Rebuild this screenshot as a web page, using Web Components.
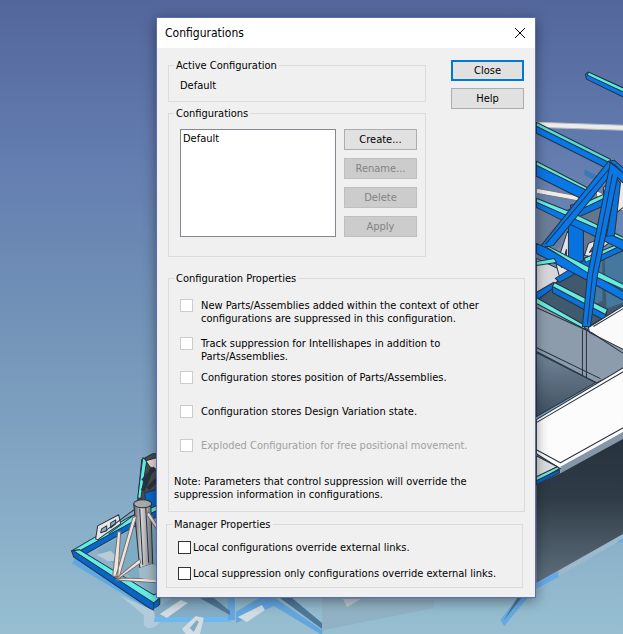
<!DOCTYPE html>
<html lang="en">
<head>
<meta charset="utf-8">
<title>Configurations</title>
<style>
body{margin:0;font:11px/13px "DejaVu Sans Condensed","Noto Sans",sans-serif;color:#000;background:#7797ba}
</style>
</head>
<body>
<config-workspace></config-workspace>
<script>
function define(name, html, setup) {
  const template = document.createElement('template');
  template.innerHTML = html;
  customElements.define(name, class extends HTMLElement {
    constructor() {
      super();
      this.attachShadow({ mode: 'open' }).append(template.content.cloneNode(true));
    }
    connectedCallback() { if (setup) setup(this, this.shadowRoot); }
  });
}

define('model-scene', `
<style>
:host{display:block;overflow:hidden}
svg{display:block;width:100%;height:100%}
</style>
<svg viewBox="0 0 623 634" preserveAspectRatio="xMidYMid slice" aria-hidden="true">
  <defs>
    <linearGradient id="sky" x1="0" y1="0" x2="0" y2="1"><stop offset="0" stop-color="#53669c"/><stop offset=".25" stop-color="#637db0"/><stop offset=".5" stop-color="#7292b7"/><stop offset=".8" stop-color="#87acc7"/><stop offset="1" stop-color="#97bfd1"/></linearGradient>
    <linearGradient id="side" x1="0" y1="0" x2="0" y2="1"><stop offset="0" stop-color="#26323c"/><stop offset=".4" stop-color="#2f3c47"/><stop offset="1" stop-color="#60717f"/></linearGradient>
    <linearGradient id="floor" x1="0" y1="0" x2="0" y2="1"><stop offset="0" stop-color="#71859a"/><stop offset="1" stop-color="#3f4f5e"/></linearGradient>
    <linearGradient id="tube" x1="0" y1="0" x2="1" y2="0"><stop offset="0" stop-color="#5c5d62"/><stop offset=".4" stop-color="#d5d3d5"/><stop offset="1" stop-color="#77787c"/></linearGradient>
  </defs>
  <rect width="623" height="634" fill="url(#sky)"/>

  <g stroke="#28323d" stroke-width="1" stroke-linejoin="round">
    <path d="M536 122L623 125V130L536 127Z" fill="#eeecea" stroke="#b9bac0"/>
    <path d="M588 72L623 88V97L586 79L585 74Z" fill="#0878e8"/><path d="M588 72L623 88V92L587 75Z" fill="#58eee5"/>
    <path d="M536 188L580 196V201L536 193ZM596 190L623 205V211L596 196Z" fill="#eeecea" stroke="#777"/>
    <path d="M584 169L600 177V183L584 175Z" fill="#3c79b8" stroke="none"/>
    <path d="M536 204L570 213L560 246L536 262Z" fill="#6b7d98" stroke="none"/>
    <path d="M570 205L606 196L606 244L575 258Z" fill="#62768f"/>
    <path d="M536 258L566 272L553 285L536 296Z" fill="#d5d7dc"/>
    <path d="M536 300L583 258L623 244V306L588 326Z" fill="#41596f"/>
    <path d="M584 264L602 258V300L590 307ZM604 252L623 248V302L606 308Z" fill="#45789f" stroke="none"/>
    <path d="M603 187L610 182V198L603 202ZM619 182L623 181V207L615 213Z" fill="#eceaea"/>
    <path d="M556 265L567 231L570 233L568 258L575 270L559 276ZM561 267L566 249L566 263Z" fill="#e4e3e4" fill-rule="evenodd"/>
    <path d="M584 255L588 243L608 235V243L590 256ZM589 252L592 247L602 243V247Z" fill="#e4e3e4" fill-rule="evenodd"/>
    <path d="M568 222L583 226V260L568 267Z" fill="#0873df"/>
    <path d="M565 214L609 194V203L566 222Z" fill="#0873df"/><path d="M565 211L608 192V196L566 216Z" fill="#65ebdf"/>
    <path d="M555 278L585 259L623 242V250L588 266L559 282Z" fill="#0873df"/><path d="M584 258L623 241V244L585 262Z" fill="#65ebdf"/>
    <path d="M536 163L588 190L584 200L536 176Z" fill="#0878e8"/><path d="M536 161L590 189V192L536 165Z" fill="#65ebdf"/>
    <path d="M536 200L571 215L623 240V250L566 222L536 207Z" fill="#0878e8"/><path d="M536 198L571 212L623 237V240L566 215L536 202Z" fill="#65ebdf"/>
    <path d="M536 124L611 161L606 168L536 133Z" fill="#0878e8"/><path d="M536 122L610 159V163L536 126Z" fill="#55dcd8"/>
    <path d="M611 172L620 183L614 235L606 236L613 196Z" fill="#0873df"/>
    <path d="M541 245L608 161L615 165L613 171L553 245L540 248Z" fill="#0878e8"/><path d="M545 244L611 166" fill="none"/>
    <path d="M536 243L545 247L623 291V300L589 281L536 253Z" fill="#0878e8"/><path d="M545 246L548 246L623 284V289L588 273Z" fill="#65ebdf"/>
    <path d="M536 261L554 258L556 262L536 265Z" fill="#65ebdf"/>
    <path d="M536 292L553 282L558 284L536 300Z" fill="#0873df"/>
    <path d="M552 285L606 312L604 320L552 292Z" fill="#0873df"/><path d="M554 282L607 309L605 314L552 286Z" fill="#65ebdf"/>
    <path d="M536 302L587 329L623 345V370L596 382L536 351Z" fill="#8d9cad"/>
    <path d="M536 297L583 324L585 329L536 303Z" fill="#65ebdf"/>
    <path d="M610 162L616 167L623 173V183L617 177L597 275L590 326L582 326L587 275Z" fill="#0878e8"/><path d="M612 174L592 275L587 324" fill="none"/>
    <path d="M608 161L615 165L623 173V168L614 160Z" fill="#0878e8"/>
    <path d="M588 327L623 305V349L589 332Z" fill="#fafafa"/>
    <path d="M536 307L591 332L623 353M582 329V376M586 330V378M536 347L600 378M593 326L623 308" fill="none"/>
    <path d="M536 352L595 382L536 416Z" fill="url(#floor)"/>
    <path d="M536 419L623 367V432L560 468L536 453Z" fill="#fcfcfc"/>
    <path d="M536 422L623 371M536 449L560 462L623 427M536 456L556 467" fill="none"/>
    <path d="M560 466L623 431V438L561 472Z" fill="#8496a8" stroke="none"/>
    <path d="M536 455L557 466L536 477Z" fill="#dadde0"/>
    <path d="M536 476L557 466L559 468L536 481Z" fill="#65ebdf"/><path d="M536 480L559 469V472L536 484Z" fill="#0865ce"/>
  </g>
  <path d="M536 484L561 472L623 438V536L536 585Z" fill="url(#side)"/>
  <path d="M536 582L623 533V538L536 588Z" fill="#9db9cc"/><path d="M536 582L558 570V576L536 588ZM615 542L623 537V541Z" fill="#65a9e8"/>

  <g stroke="#263441" stroke-width="1" stroke-linejoin="round">
    <path d="M74 560L156 609L160 606" stroke="#5fa8e1" stroke-width="6" fill="none"/>
    <path d="M97 550L134 527H160V598Z" fill="#7eacc4" stroke="none"/>
    <path d="M97 554L111 550L121 560L108 560Z" fill="#b8cbd7" stroke="none"/>
    <path d="M137 510L142 459L153 453H160V515Z" fill="#4c4b50"/>
    <path d="M138 497L143 457L147 460L141 498Z" fill="#60eee2"/><path d="M146 460L160 456V472L150 466Z" fill="#e7d9d8"/><path d="M145 492L160 488V514L146 506Z" fill="#0868cd"/>
    <path d="M143 480L155 467M143 490L152 468M148 488L158 478" stroke-width="4"/>
    <path d="M72 550L128 520L160 508V515L132 527L79 557Z" fill="#0867cf"/><path d="M72 550L128 517L159 504V509L131 522L80 550Z" fill="#62eee5"/>
    <path d="M72 550L80 549L154 597L160 594V603L154 610L74 556Z" fill="#0865c9"/><path d="M74 550L80 549L154 594L160 591V597L154 602Z" fill="#62eee5"/><path d="M154 601V609" fill="none"/>
    <path d="M96 538L98 525L119 514L121 523L106 533L98 539ZM101 532L102 528L107 525V530ZM111 527V522L116 519V523Z" fill="#e6e6e7" fill-rule="evenodd"/>
    <path d="M107 529L137 507M109 533L137 512" fill="none"/>
    <path d="M134 503H151L153 563L140 567Z" fill="url(#tube)"/><path d="M140 508L143 564M146 507L149 562" fill="none"/>
    <ellipse cx="143" cy="503" rx="9" ry="4" fill="#aaa"/>
    <path d="M113 575L118 531L121 531L118 576ZM116 576L133 517L137 515L120 575ZM117 577L140 558L141 562L120 577ZM122 577L160 578V582L116 579ZM147 514L160 533V528L149 511Z" fill="#eee5e1" stroke="#77706c"/>
    <path d="M139 567L152 563L160 567V580L140 577Z" fill="#a3bcc9" stroke="none"/>
  </g>
  <g>
    <path d="M121 595L144 614V624Q151 632 160 621L157 611Z" fill="#b1cbda"/>
    <path d="M154 608L173 597H231V621H156Z" fill="#85adc5"/>
    <path d="M155 616L231 616V621H154Z" fill="#6fb7ef"/>
    <path d="M228 597H235V619H228ZM236 611L259 597H275L322 629V634L274 605L236 622Z" fill="#63a6df"/>
    <path d="M200 597H214L230 610V614ZM280 597H292L322 622V628Z" fill="#4f7898"/>
    <path d="M160 613L181 599L188 602L167 617ZM238 616L262 604L265 609L247 621ZM182 628L196 615L204 617L200 634H187Z" fill="#d1dce3"/>
    <path d="M190 627L197 619L199 621L194 631Z" fill="#83abc0"/>
    <path d="M322 634V597H345L370 599H434V607L324 629Z" fill="#91b2c4"/><path d="M343 598H361L347 606Z" fill="#bbcbd7"/>
    <path d="M517 597H527L504 625L500 619Z" fill="#64a8e4"/><path d="M517 597H521L503 620Z" fill="#4f718c"/>
  </g>
</svg>`);

define('dialog-button', `
<style>
:host{display:block}
button{display:block;box-sizing:border-box;width:100%;height:21px;margin:0;padding:0;border:1px solid #adadad;background:#e1e1e1;color:#000;font:inherit;text-align:center}
:host([primary]) button{border:2px solid #0078d7}
button:disabled{background:#ccc;border-color:#bfbfbf;color:#838383}
</style>
<button type="button"><slot></slot></button>`, (host, root) => {
  root.querySelector('button').disabled = host.hasAttribute('disabled');
});

define('group-box', `
<style>
:host{display:block}
fieldset{box-sizing:border-box;min-width:0;margin:0;border:1px solid #dcdcdc;padding:var(--group-padding,8px)}
legend{line-height:12px;padding:2px 2px 0}
</style>
<fieldset><legend></legend><slot></slot></fieldset>`, (host, root) => {
  root.querySelector('legend').textContent = host.getAttribute('label');
});

define('check-option', `
<style>
:host{display:block}
label{display:flex;align-items:flex-start;gap:var(--check-gap,8px)}
input{appearance:none;box-sizing:border-box;flex:none;width:13px;height:13px;margin:0;border:1px solid #333;background:#fff}
input:checked{background:#0078d7}
:host([muted]) input,input:disabled{border-color:#ccc}
:host([disabled]) label{color:#a0a0a0}
</style>
<label><input type="checkbox"><span><slot></slot></span></label>`, (host, root) => {
  root.querySelector('input').disabled = host.hasAttribute('disabled') || host.hasAttribute('muted');
});

define('configuration-list', `
<style>
:host{display:grid}
select{display:block;box-sizing:border-box;width:100%;height:0;min-height:100%;margin:0;padding:1px;border:1px solid #828790;border-radius:0;background:#fff;color:#000;font:inherit;outline:0;overflow:hidden}
option{padding:1px;min-height:13px}
</style>
<select size="7" aria-label="Configurations"><option>Default</option></select>`);

define('title-bar', `
<style>
:host{display:flex;align-items:center;justify-content:space-between;height:30px;padding-left:8px;background:#fff;font-size:12px}
h1{margin:0;font:inherit}
button{display:grid;place-items:center;width:30px;height:30px;padding:0;border:0;background:none}
svg{display:block}
</style>
<h1><slot></slot></h1>
<button type="button" aria-label="Close window"><svg width="12" height="12" viewBox="0 0 12 12"><path d="M1 1L11 11M11 1L1 11" fill="none" stroke="#000" stroke-width="1"/></svg></button>`);

define('configurations-dialog', `
<style>
:host{display:block;background:#f0f0f0;border:1px solid #5b6cb5;box-shadow:0 3px 12px rgba(0,0,0,.42)}
.content{padding:10px 10px 9px 9px}
.upper{display:grid;grid-template-columns:minmax(0,1fr) 73px;gap:25px;padding:0 1px 0 2px}
.groups{display:grid;gap:4px}
.actions{display:grid;gap:7px;align-content:start;padding-top:2px}
.active{--group-padding:7px 11px 8px 5px}
.active p{margin:0 0 0 6px;line-height:14px}
.manage{--group-padding:9px 8px 19px 5px}
.picker{display:grid;grid-template-columns:minmax(0,1fr) 73px;gap:8px;margin-left:6px}
.commands{display:grid;gap:8px}
.properties{--group-padding:14px 8px 10px 5px;margin:14px 0 0 2px}
.options{display:grid;padding-left:6px}
.track{margin-top:12px}
.position{margin-top:8px}
.variation,.exploded{margin-top:21px}
.note{margin:23px 0 0}
.manager{--group-padding:10px 8px 7px 5px;--check-gap:2px;margin:5px 2px 0 0}
.links{display:grid;gap:13px;padding-left:6px}
</style>
<title-bar>Configurations</title-bar>
<div class="content">
  <div class="upper">
    <div class="groups">
      <group-box class="active" label="Active Configuration"><p>Default</p></group-box>
      <group-box class="manage" label="Configurations">
        <div class="picker">
          <configuration-list></configuration-list>
          <div class="commands">
            <dialog-button>Create...</dialog-button>
            <dialog-button disabled>Rename...</dialog-button>
            <dialog-button disabled>Delete</dialog-button>
            <dialog-button disabled>Apply</dialog-button>
          </div>
        </div>
      </group-box>
    </div>
    <div class="actions"><dialog-button primary>Close</dialog-button><dialog-button>Help</dialog-button></div>
  </div>
  <group-box class="properties" label="Configuration Properties">
    <div class="options">
      <check-option muted>New Parts/Assemblies added within the context of other<br>configurations are suppressed in this configuration.</check-option>
      <check-option muted class="track">Track suppression for Intellishapes in addition to<br>Parts/Assemblies.</check-option>
      <check-option muted class="position">Configuration stores position of Parts/Assemblies.</check-option>
      <check-option muted class="variation">Configuration stores Design Variation state.</check-option>
      <check-option disabled class="exploded">Exploded Configuration for free positional movement.</check-option>
    </div>
    <p class="note">Note: Parameters that control suppression will override the<br>suppression information in configurations.</p>
  </group-box>
  <group-box class="manager" label="Manager Properties">
    <div class="links">
      <check-option>Local configurations override external links.</check-option>
      <check-option>Local suppression only configurations override external links.</check-option>
    </div>
  </group-box>
</div>`);

define('config-workspace', `
<style>
:host{display:block;position:relative;box-sizing:border-box;min-height:100vh;padding:17px 87px 37px 156px;overflow:hidden}
model-scene{position:absolute;inset:0}
configurations-dialog{position:relative}
</style>
<model-scene></model-scene>
<configurations-dialog></configurations-dialog>`);
</script>
</body>
</html>
